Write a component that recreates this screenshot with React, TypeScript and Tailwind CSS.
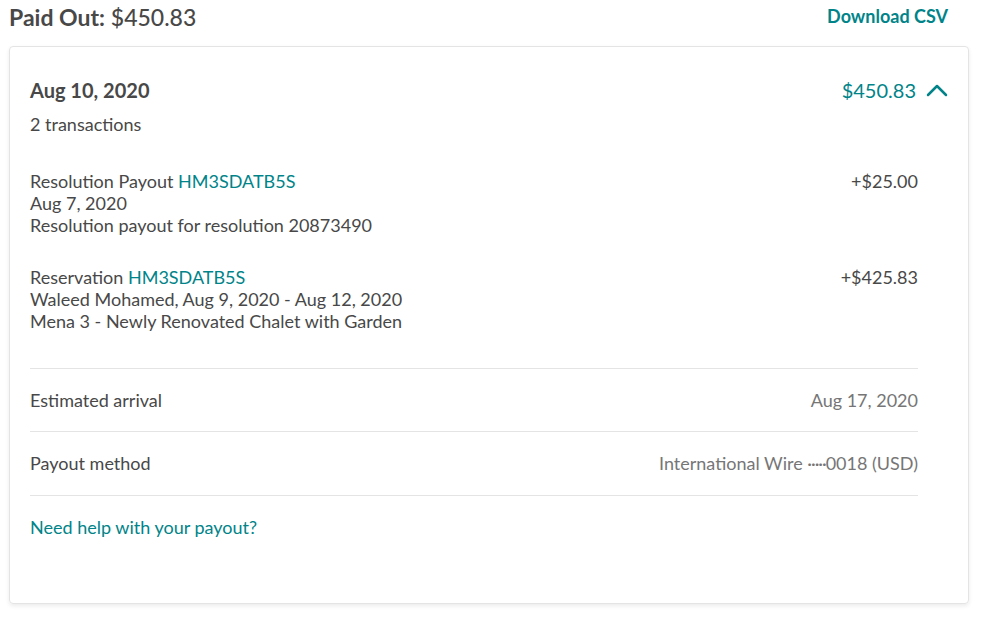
import React from "react";

const font = { fontFamily: "Lato, 'Open Sans', sans-serif" };

export default function App() {
  return (
    <div className="w-[984px] h-[619px] bg-white text-[#484848] overflow-hidden" style={font}>
      <div className="flex items-center justify-between pl-[9px] pr-[36px] h-[36px] pt-[0px]">
        <div className="text-[23px] leading-[28px] -mt-[2px]">
          <span className="font-bold">Paid Out:</span> <span className="font-medium">$450.83</span>
        </div>
        <div className="text-[18px] font-bold text-[#008489] -mt-[4px]">Download CSV</div>
      </div>
      <div className="ml-[9px] mt-[10px] w-[960px] h-[558px] border border-[#e4e4e4] rounded-[4px] shadow-[0_2px_4px_rgba(0,0,0,0.08)] pt-[28px] pl-[20px] pr-[20px]">
        <div className="flex items-center justify-between h-[30px]">
          <div className="text-[20px] font-bold">Aug 10, 2020</div>
          <div className="flex items-center gap-[10px] text-[#008489]">
            <span className="text-[20px]">$450.83</span>
            <svg width="22" height="14" viewBox="0 0 22 14" fill="none">
              <path d="M2 12 L11 3 L20 12" stroke="#008489" strokeWidth="2.5" strokeLinecap="round" strokeLinejoin="round" />
            </svg>
          </div>
        </div>
        <div className="text-[18px] leading-[22px] mt-[8px]">2 transactions</div>
        <div className="pr-[30px]">
          <div className="flex justify-between mt-[35px] text-[18px] leading-[22px]">
            <div>
              <div>Resolution Payout <span className="text-[#008489]">HM3SDATB5S</span></div>
              <div>Aug 7, 2020</div>
              <div>Resolution payout for resolution 20873490</div>
            </div>
            <div>+$25.00</div>
          </div>
          <div className="flex justify-between mt-[30px] text-[18px] leading-[22px]">
            <div>
              <div>Reservation <span className="text-[#008489]">HM3SDATB5S</span></div>
              <div>Waleed Mohamed, Aug 9, 2020 - Aug 12, 2020</div>
              <div>Mena 3 - Newly Renovated Chalet with Garden</div>
            </div>
            <div>+$425.83</div>
          </div>
          <div className="mt-[36px] border-t border-[#e4e4e4]" />
          <div className="flex justify-between items-center h-[62px] text-[18px]">
            <div>Estimated arrival</div>
            <div className="text-[#767676]">Aug 17, 2020</div>
          </div>
          <div className="border-t border-[#e4e4e4]" />
          <div className="flex justify-between items-center h-[63px] text-[18px]">
            <div>Payout method</div>
            <div className="text-[#767676]">International Wire <span className="tracking-[-1px]">·····</span>0018 (USD)</div>
          </div>
          <div className="border-t border-[#e4e4e4]" />
          <div className="flex items-center h-[62px] text-[18px] text-[#008489]">Need help with your payout?</div>
        </div>
      </div>
    </div>
  );
}
